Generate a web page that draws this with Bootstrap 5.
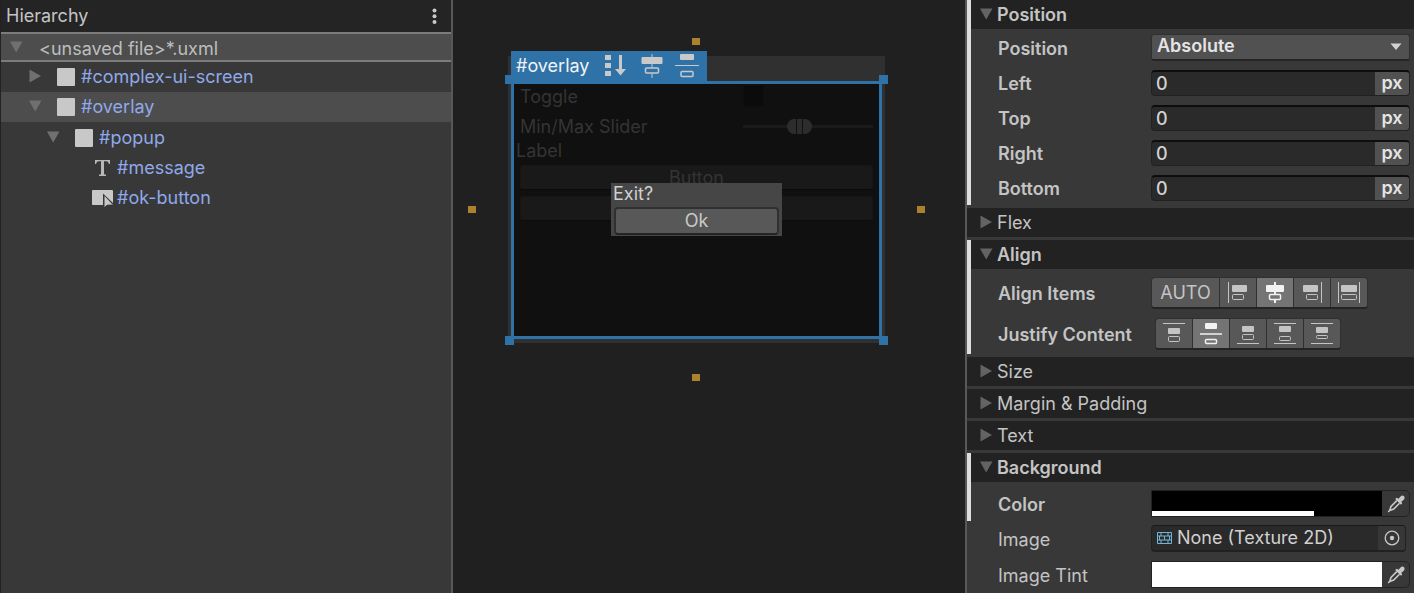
<!DOCTYPE html>
<html lang="en">
<head>
<meta charset="utf-8">
<meta name="viewport" content="width=device-width, initial-scale=1">
<title>UI Builder</title>
<link href="https://cdn.jsdelivr.net/npm/bootstrap@5.3.0/dist/css/bootstrap.min.css" rel="stylesheet">
<style>
  :root { --panel:#383838; --head:#222; --line:#585858; --ink:#c4c4c4; --sel:#4d4d4d; --blue:#2f72a8; }
  body { font-family:Inter,"Open Sans",sans-serif; font-size:18px; line-height:24px; color:var(--ink); background:#202020; }
  button, input, select { font:inherit; color:inherit; }
  svg { display:block; flex:none; }
  .builder { display:grid; grid-template-columns:453fr 512fr 449fr; min-height:100vh; }
  .builder > * { min-width:0; }

  /* Hierarchy */
  .hierarchy { background:var(--panel); border-left:1px solid #222; border-right:2px solid var(--line); }
  .panel-head { background:#242424; height:32px; padding:0 8px 0 5px; }
  .tree-row { height:30px; color:#8fa9ea; text-decoration:none; }
  .tree-row:hover { color:#a9bdf2; }
  .tree-root { height:30px; padding:3px 0 0 8px; color:#bdbdbd; background:var(--sel); border-block:2px solid #7c7c7c; }
  .tree-root svg { margin:-4px 16px 0 0; }
  .tree-row.selected { background:var(--sel); }
  .fold { width:14px; height:14px; fill:#707070; margin-top:-3px; }
  .lvl-1 { padding-left:27px; } .lvl-2 { padding-left:45px; } .lvl-3 { padding-left:90px; }
  .lvl-2, .lvl-3 { padding-top:2px; }
  .box-icon { width:18px; height:18px; margin:0 6px 0 15px; border-radius:1px; background:#c8c8c8; }
  .type-icon { width:22px; height:18px; margin-right:4px; }

  /* Canvas */
  .viewport-area { position:relative; padding:56px 80px 0 55px; }
  .stage { position:relative; background:#303030; padding:25px 3px 4px; }
  .overlay-box { position:relative; height:258px; border:3px solid var(--blue); background:#101010; color:#343434; }
  .dialog-layer { padding-bottom:2px; }
  .tag { position:absolute; left:3px; top:-5px; height:30px; background:var(--blue); color:#f2f2f2; padding:0 8px 0 5px; gap:12px; }
  .tag span { padding-right:4px; }
  .handle { position:absolute; width:9px; height:9px; background:var(--blue); }
  .h-tl { left:-9px; top:-9px; } .h-tr { right:-9px; top:-9px; }
  .h-bl { left:-9px; bottom:-9px; } .h-br { right:-9px; bottom:-9px; }
  .anchor { position:absolute; width:8px; height:7px; background:#a9812f; }
  .a-t { left:calc(50% - 5px); top:-18px; } .a-b { left:calc(50% - 5px); bottom:-38px; }
  .a-l { left:-40px; top:150px; } .a-r { right:-40px; top:150px; }
  .ui-row { padding:0 6px; height:31px; }
  .ui-row.first { height:25px; }
  .ui-row > label { flex:1; }
  .ui-value { width:130px; }
  .dark-check { appearance:none; display:block; width:21px; height:21px; margin:0; border-radius:3px; background:#0b0b0b; border:1px solid #0e0e0e; border-top-color:#070707; }
  .dark-range { appearance:none; display:block; width:130px; height:15px; margin:0; background:linear-gradient(#1b1b1b,#1b1b1b) center/100% 3px no-repeat; }
  .dark-range::-webkit-slider-thumb { appearance:none; width:25px; height:15px; border-radius:8px;
    background:linear-gradient(90deg,#2d2d2d 9px,#101010 9px 10px,#2d2d2d 10px 15px,#101010 15px 16px,#2d2d2d 16px); }
  .ui-label { padding-left:2px; height:20px; line-height:22px; }
  .dark-btn { display:block; height:25px; margin:5px 6px 6px; padding:0; line-height:21px; background:#191919; border:1px solid #161616; border-bottom-color:#0b0b0b; border-radius:3px; color:#343434; align-self:stretch; }
  .popup { width:171px; height:53px; background:#464646; color:#d0d0d0; padding:0 3px; }
  .popup p { margin:0; height:22px; line-height:22px; margin-bottom:2px; margin-left:-1px; }
  .ok-btn { width:100%; height:28px; padding:0; line-height:24px; background:#585858; border:2px solid #303030; border-bottom-color:#242424; border-radius:4px; color:#c8c8c8; }

  /* Inspector */
  .inspector { border-left:2px solid var(--line); background:var(--panel); }
  .sect + .sect { margin-top:3px; }
  .fold-head { display:flex; align-items:center; width:100%; height:29px; padding:0 0 0 12px; border:0; background:var(--head); text-align:left; }
  .fold-head svg { width:14px; height:14px; fill:#636363; margin-right:4px; margin-top:-1px; }
  .changed { border-left:4px solid #dedede; }
  .changed .fold-head { padding-left:8px; }
  .strong { font-weight:600; }
  .fields { display:grid; grid-template-columns:minmax(0,1fr); gap:9px; padding:5px 4px 4px 27px; }
  .fields.wide { padding-top:8px; }
  .fields.plain { padding-left:31px; }
  .field { display:flex; align-items:center; }
  .field > label, .field > .caption { width:153px; flex:none; padding-top:2px; }
  .drop { position:relative; }
  .drop select { appearance:none; display:block; width:100%; height:27px; padding:0 5px 2px; line-height:22px; background:#515151; border:1px solid #303030; border-bottom:2px solid #242424; border-radius:3px; color:#e4e4e4; }
  .drop svg { position:absolute; right:8px; top:9px; pointer-events:none; }
  .unit { height:26px; background:#2a2a2a; border:1px solid #212121; border-top:2px solid #0d0d0d; border-radius:4px; overflow:hidden; }
  .unit input { flex:1; min-width:0; border:0; background:none; padding:0 4px; height:23px; font-weight:500; color:#d2d2d2; }
  .unit button { width:34px; padding:0 0 2px; border:0; background:#515151; line-height:21px; color:#e4e4e4; }
  .seg { height:32px; border:1px solid #303030; border-bottom:2px solid #242424; border-radius:4px; overflow:hidden; background:#303030; gap:1px; }
  .seg button { width:36px; padding:0; border:0; background:#585858; color:var(--ink); display:flex; align-items:center; justify-content:center; }
  .seg button.auto { width:67px; }
  .seg button.on { background:#747474; color:#f2f2f2; }
  .seg .f { fill:currentColor; }
  .seg path, .seg .o { fill:none; stroke:currentColor; }
  .seg .on .o { fill:#747474; }
  .swatch { height:27px; border:1px solid #222; border-radius:0 5px 5px 0; overflow:hidden; background:#383838; }
  .swatch .tone { position:relative; flex:1; }
  .swatch input { appearance:none; display:block; width:100%; height:25px; padding:0; border:0; background:none; }
  .swatch input::-webkit-color-swatch-wrapper { padding:0; }
  .swatch input::-webkit-color-swatch { border:0; border-radius:0; }
  .alpha { position:absolute; left:0; bottom:0; height:5px; background:#fff; }
  .pick { width:27px; border:0; padding:0; background:none; display:flex; align-items:center; justify-content:center; }
  .asset { height:27px; border:1px solid #212121; border-top-color:#191919; border-bottom-width:2px; border-radius:4px; background:#2a2a2a; margin-right:4px; overflow:hidden; }
  .asset input { flex:1; min-width:0; border:0; padding:0 4px; background:none; color:#d0d0d0; }
  .asset .pick { background:#373737; align-self:stretch; }
</style>
</head>
<body>
<svg width="0" height="0" class="position-absolute" aria-hidden="true">
  <symbol id="down" viewBox="0 0 14 14"><path d="M1 1.500H13.500L7.200 12.500Z"/></symbol>
  <symbol id="right" viewBox="0 0 14 14"><path d="M1.500 .500L13 7L1.500 13.500Z"/></symbol>
  <symbol id="dropper" viewBox="0 0 18 18">
    <path fill="#c8c8c8" d="M8.200 4L9.800 2.800L11.500 3.700L13.800 1.200C15 0 18 .500 17.500 3.500C17 4.800 15.800 5.500 14.300 6.700L15.200 8.400L14 9.800Z"/>
    <path fill="none" stroke="#c8c8c8" stroke-width="1.600" d="M9.800 5.600L4 11.400L2.700 15.400L6.700 14.100L12.500 8.300M1.200 17L3.500 14.500"/>
  </symbol>
</svg>

<main class="builder">
  <section class="hierarchy" aria-label="Hierarchy">
    <header class="panel-head d-flex align-items-center justify-content-between">
      <span>Hierarchy</span>
      <button type="button" class="btn p-0 border-0" aria-label="Hierarchy options">
        <svg width="16" height="16" viewBox="0 0 16 16" fill="#cacaca"><circle cx="7.500" cy="2.500" r="2"/><circle cx="7.500" cy="8.200" r="2"/><circle cx="7.500" cy="14" r="2"/></svg>
      </button>
    </header>
    <nav class="d-flex flex-column">
      <a href="#file" class="tree-row tree-root d-flex align-items-center"><svg class="fold"><use href="#down"/></svg>&lt;unsaved file&gt;*.uxml</a>
      <a href="#screen" class="tree-row lvl-1 d-flex align-items-center"><svg class="fold"><use href="#right"/></svg><span class="box-icon"></span>#complex-ui-screen</a>
      <a href="#overlay" class="tree-row lvl-1 selected d-flex align-items-center"><svg class="fold"><use href="#down"/></svg><span class="box-icon"></span>#overlay</a>
      <a href="#popup" class="tree-row lvl-2 d-flex align-items-center"><svg class="fold"><use href="#down"/></svg><span class="box-icon"></span>#popup</a>
      <a href="#message" class="tree-row lvl-3 d-flex align-items-center">
        <svg class="type-icon" viewBox="0 0 22 18" fill="#b8b8b8"><path d="M4 1H19V5H18Q17.500 2.300 15.500 2.200H13V14.500Q13 15.700 15 15.800V17H8V15.800Q10 15.700 10 14.500V2.200H7.500Q5.500 2.300 5 5H4Z"/></svg>#message</a>
      <a href="#ok" class="tree-row lvl-3 d-flex align-items-center">
        <svg class="type-icon" viewBox="0 0 22 18"><rect x="1" y="1" width="21" height="15" rx="1" fill="#c8c8c8"/><path d="M12 4.500V18.500H15L21.500 15.500H22V14Z" fill="#383838"/><path d="M13.500 7V18L16 15.800L21.500 15.500Z" fill="#c8c8c8"/></svg>#ok-button</a>
    </nav>
  </section>

  <section class="viewport-area" aria-label="Viewport">
    <div class="stage">
      <div class="overlay-box">
        <div class="d-flex flex-column">
          <div class="ui-row first d-flex align-items-center"><label for="tg">Toggle</label><div class="ui-value"><input id="tg" class="dark-check" type="checkbox"></div></div>
          <div class="ui-row d-flex align-items-center pt-1"><label for="mm">Min/Max Slider</label><div class="ui-value"><input id="mm" class="dark-range" type="range" min="0" max="100" value="42"></div></div>
          <div class="ui-label">Label</div>
          <button type="button" class="dark-btn">Button</button>
          <button type="button" class="dark-btn mt-0" aria-label="Second button"></button>
        </div>
        <div class="dialog-layer position-absolute top-0 start-0 w-100 h-100 d-flex align-items-center justify-content-center">
          <div class="popup"><p>Exit?</p><button type="button" class="ok-btn">Ok</button></div>
        </div>
        <i class="handle h-tl"></i><i class="handle h-tr"></i><i class="handle h-bl"></i><i class="handle h-br"></i>
      </div>
      <div class="tag d-flex align-items-center">
        <span>#overlay</span>
        <svg width="24" height="24" viewBox="0 0 24 24" fill="#c9c9c9"><path d="M0 1h6v5H0zM0 9h6v5H0zM0 17h6v5H0zM14 1h3v14h4L15.500 21.500L10 15H14z"/></svg>
        <svg width="22" height="24" viewBox="0 0 22 24"><path d="M11 0V24" stroke="#c9c9c9"/><rect x="0.500" y="3" width="21" height="7" rx="1" fill="#c9c9c9"/><rect x="4.500" y="14" width="13" height="5" rx="1" fill="#2f72a8" stroke="#c9c9c9" stroke-width="1.500"/></svg>
        <svg width="24" height="24" viewBox="0 0 24 24"><path d="M0 11.500H24" stroke="#c9c9c9"/><rect x="5" y="0" width="14" height="6" rx="1" fill="#c9c9c9"/><rect x="6" y="17.500" width="12" height="5" rx="1" fill="none" stroke="#c9c9c9" stroke-width="1.500"/></svg>
      </div>
      <i class="anchor a-t"></i><i class="anchor a-b"></i><i class="anchor a-l"></i><i class="anchor a-r"></i>
    </div>
  </section>

  <section class="inspector" aria-label="Inspector">
    <div class="sect changed strong">
      <button type="button" class="fold-head"><svg><use href="#down"/></svg>Position</button>
      <div class="fields">
        <div class="field"><label for="pos">Position</label><div class="drop flex-grow-1"><select id="pos"><option>Absolute</option><option>Relative</option></select><svg width="12" height="8" viewBox="0 0 12 8" fill="#d2d2d2"><path d="M.500 .500H11.500L6 7Z"/></svg></div></div>
        <div class="field"><label for="l">Left</label><div class="unit d-flex flex-grow-1"><input id="l" value="0"><button type="button">px</button></div></div>
        <div class="field"><label for="t">Top</label><div class="unit d-flex flex-grow-1"><input id="t" value="0"><button type="button">px</button></div></div>
        <div class="field"><label for="r">Right</label><div class="unit d-flex flex-grow-1"><input id="r" value="0"><button type="button">px</button></div></div>
        <div class="field"><label for="b">Bottom</label><div class="unit d-flex flex-grow-1"><input id="b" value="0"><button type="button">px</button></div></div>
      </div>
    </div>
    <div class="sect"><button type="button" class="fold-head"><svg><use href="#right"/></svg>Flex</button></div>
    <div class="sect changed">
      <button type="button" class="fold-head strong"><svg><use href="#down"/></svg>Align</button>
      <div class="fields wide">
        <div class="field"><span class="caption strong">Align Items</span>
          <div class="seg d-flex" role="group" aria-label="Align Items">
            <button type="button" class="auto">AUTO</button>
            <button type="button" aria-label="Start"><svg width="22" height="22"><path d="M1.500 0V21"/><rect class="f" x="5" y="3" width="15" height="7" rx="1"/><rect class="o" x="5.500" y="12.500" width="11" height="5" rx="1"/></svg></button>
            <button type="button" class="on" aria-label="Center"><svg width="22" height="22"><path d="M11 0V21" stroke-width="2"/><rect class="f" x="2" y="3" width="18" height="7" rx="1"/><rect class="o" x="5.500" y="12.500" width="11" height="5" rx="1" stroke-width="1.500"/></svg></button>
            <button type="button" aria-label="End"><svg width="22" height="22"><path d="M20.500 0V21"/><rect class="f" x="2" y="3" width="15" height="7" rx="1"/><rect class="o" x="5.500" y="12.500" width="11" height="5" rx="1"/></svg></button>
            <button type="button" aria-label="Stretch"><svg width="22" height="22"><path d="M.500 0V21M21.500 0V21"/><rect class="f" x="3" y="3" width="16" height="7" rx="1"/><rect class="o" x="3.500" y="12.500" width="15" height="5" rx="1"/></svg></button>
          </div>
        </div>
        <div class="field"><span class="caption strong me-1">Justify Content</span>
          <div class="seg d-flex" role="group" aria-label="Justify Content">
            <button type="button" aria-label="Start"><svg width="22" height="22"><path d="M0 .500H22"/><rect class="f" x="5" y="5" width="12" height="6" rx="1"/><rect class="o" x="5.500" y="13.500" width="11" height="5" rx="1"/></svg></button>
            <button type="button" class="on" aria-label="Center"><svg width="22" height="22"><path d="M0 11H22" stroke-width="1.500"/><rect class="f" x="5" y="0" width="12" height="6" rx="1"/><rect class="o" x="5.500" y="16.500" width="11" height="4" rx="1" stroke-width="1.500"/></svg></button>
            <button type="button" aria-label="End"><svg width="22" height="22"><path d="M0 20.500H22"/><rect class="f" x="5" y="3" width="12" height="6" rx="1"/><rect class="o" x="5.500" y="11.500" width="11" height="5" rx="1"/></svg></button>
            <button type="button" aria-label="Space between"><svg width="22" height="22"><path d="M0 .500H22M0 20.500H22"/><rect class="f" x="5" y="3" width="12" height="6" rx="1"/><rect class="o" x="5.500" y="13.500" width="11" height="4" rx="1"/></svg></button>
            <button type="button" aria-label="Space around"><svg width="22" height="22"><path d="M0 .500H22M0 20.500H22"/><rect class="f" x="5" y="4" width="12" height="6" rx="1"/><rect class="o" x="5.500" y="12.500" width="11" height="3" rx="1"/></svg></button>
          </div>
        </div>
      </div>
    </div>
    <div class="sect"><button type="button" class="fold-head"><svg><use href="#right"/></svg>Size</button></div>
    <div class="sect"><button type="button" class="fold-head"><svg><use href="#right"/></svg>Margin &amp; Padding</button></div>
    <div class="sect"><button type="button" class="fold-head"><svg><use href="#right"/></svg>Text</button></div>
    <div class="sect">
      <div class="changed strong">
        <button type="button" class="fold-head"><svg><use href="#down"/></svg>Background</button>
        <div class="fields wide pb-1">
          <div class="field"><label for="c">Color</label><div class="swatch d-flex flex-grow-1"><div class="tone"><input id="c" type="color" value="#000000"><span class="alpha" style="width:70.500%"></span></div><button type="button" class="pick" aria-label="Pick color"><svg width="18" height="18"><use href="#dropper"/></svg></button></div></div>
        </div>
      </div>
      <div class="fields plain pt-1">
        <div class="field"><label for="i">Image</label><div class="asset d-flex align-items-center flex-grow-1">
          <svg class="ms-1" width="17" height="14" viewBox="0 0 17 14"><path d="M1.500 1.500H15.500V12.500H1.500ZM1.500 5H15.500M1.500 9H15.500M5 1.500V5M12 1.500V5M8.500 5V9M5 9V12.500M12 9V12.500M3.500 5V9M13.500 5V9" fill="none" stroke="#72b5d6"/></svg>
          <input id="i" value="None (Texture 2D)" readonly><button type="button" class="pick" aria-label="Select texture"><svg width="16" height="16" viewBox="0 0 16 16"><circle cx="8" cy="8" r="6.800" fill="none" stroke="#c8c8c8" stroke-width="1.300"/><circle cx="8" cy="8" r="2.200" fill="#c8c8c8"/></svg></button></div></div>
        <div class="field"><label for="it">Image Tint</label><div class="swatch d-flex flex-grow-1"><div class="tone"><input id="it" type="color" value="#ffffff"></div><button type="button" class="pick" aria-label="Pick tint"><svg width="18" height="18"><use href="#dropper"/></svg></button></div></div>
      </div>
    </div>
  </section>
</main>
<script src="https://cdn.jsdelivr.net/npm/bootstrap@5.3.0/dist/js/bootstrap.bundle.min.js"></script>
</body>
</html>
